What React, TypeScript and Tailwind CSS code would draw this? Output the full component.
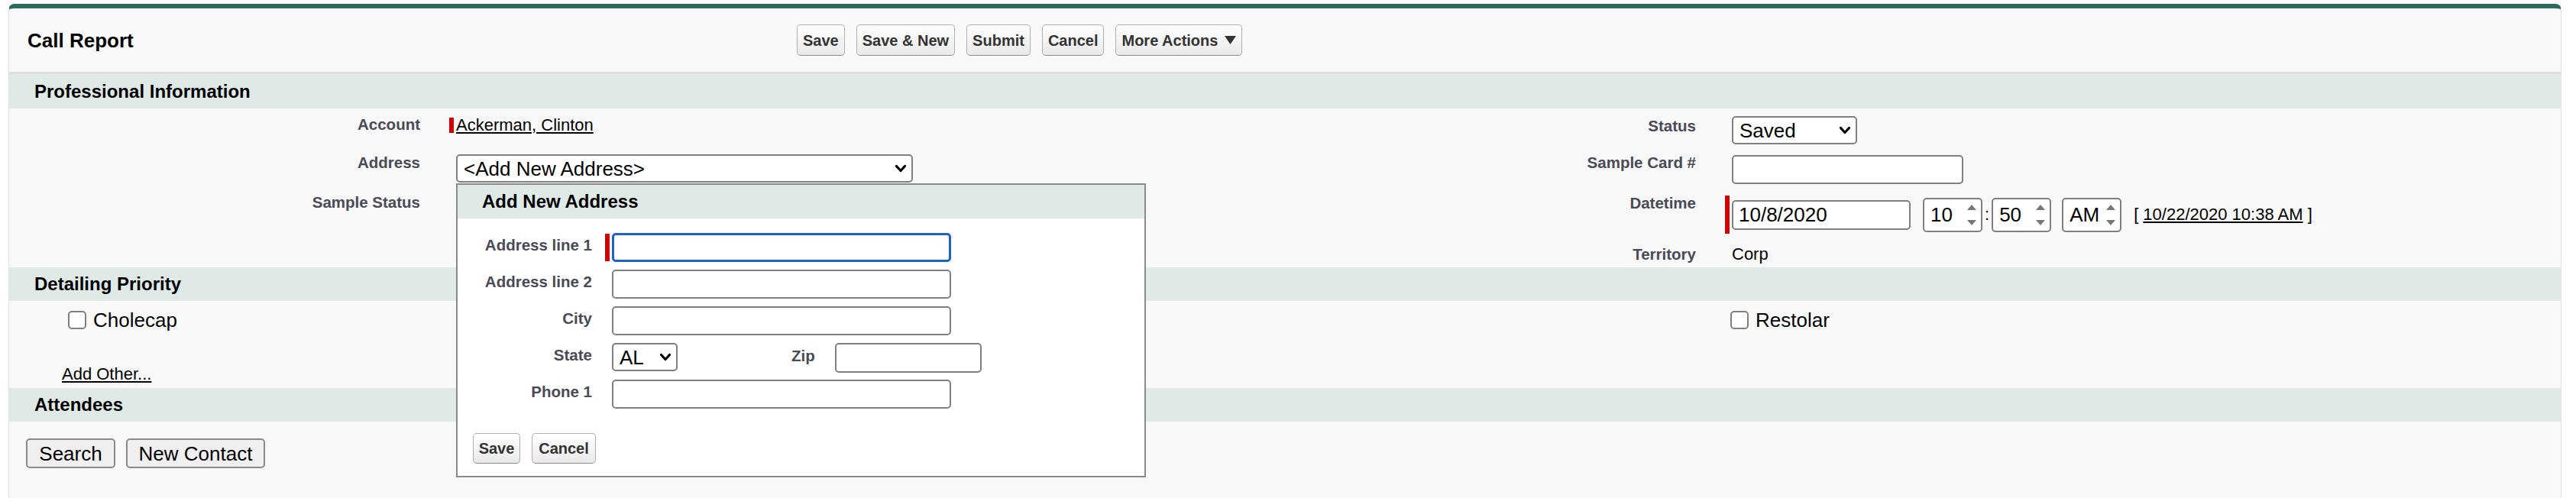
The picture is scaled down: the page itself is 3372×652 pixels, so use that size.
const label = "text-right text-[20.5px] leading-[24px] font-bold text-[#4a4a56]";
const field = "rounded-[5px] border-2 border-[#808080] bg-white";

function Chevron() {
  return (
    <svg width="16" height="11" viewBox="0 0 16 11">
      <path d="M2.5 2.5 L8 8.5 L13.5 2.5" fill="none" stroke="#000" strokeWidth="3.2" strokeLinecap="round" strokeLinejoin="round" />
    </svg>
  );
}

function Arrows() {
  return (
    <svg width="12" height="27" viewBox="0 0 12 27">
      <path d="M6 0 L12 7 L0 7 Z" fill="#777" />
      <path d="M0 20 L12 20 L6 27 Z" fill="#777" />
    </svg>
  );
}

function FakeSelect({ value, className = "" }: { value: string; className?: string }) {
  return (
    <div className={`flex items-center justify-between pl-[8px] pr-[6px] text-[26px] leading-[30px] text-black ${field} ${className}`}>
      <span>{value}</span>
      <Chevron />
    </div>
  );
}

function Spinner({ value }: { value: string }) {
  return (
    <div className={`flex h-[45px] w-[78px] items-center justify-between pl-[8px] pr-[6px] text-[26px] leading-[30px] ${field}`}>
      <span>{value}</span>
      <Arrows />
    </div>
  );
}

function Btn({ children, className = "" }: { children: React.ReactNode; className?: string }) {
  return (
    <button className={`flex items-center justify-center rounded-[5px] border border-[#b0b0b0] border-b-[#8c8c8c] bg-linear-to-b from-[#ffffff] to-[#e9e9e9] px-[7px] text-[20px] font-bold leading-[24px] text-[#333] ${className}`}>
      {children}
    </button>
  );
}

function PopupRow({ name, required, children }: { name: string; required?: boolean; children: React.ReactNode }) {
  return (
    <div className="flex h-[48px] items-start">
      <div className={`w-[176px] pt-[4px] ${label}`}>{name}</div>
      {required ? (
        <>
          <span className="ml-[17px] mt-[1px] h-[36px] w-[6px] bg-[#c00]" />
          <div className="ml-[3px]">{children}</div>
        </>
      ) : (
        <div className="ml-[26px]">{children}</div>
      )}
    </div>
  );
}

function SectionHead({ title }: { title: string }) {
  return (
    <div className="flex h-[44px] items-center bg-[#dfe9e6] pl-[33px] text-[24px] font-bold leading-[28px] text-black">
      {title}
    </div>
  );
}

export default function App() {
  return (
    <div className="min-h-[652px] bg-white pl-[11px] pt-[5px] font-['Liberation_Sans',Arial,sans-serif]">
      <div className="h-[647px] w-[3342px] rounded-t-[8px] border-x border-t-[6px] border-x-[#e2e2e2] border-t-[#2d6a5c] bg-[#f8f8f8]">
        {/* header */}
        <div className="flex h-[86px] items-center border-b-[3px] border-[#dddddd]">
          <h2 className="w-[1031px] pl-[24px] text-[26px] font-bold leading-[30px] text-black">Call Report</h2>
          <div className="flex gap-[15px]">
            <Btn className="h-[41px]">Save</Btn>
            <Btn className="h-[41px]">Save &amp; New</Btn>
            <Btn className="h-[41px]">Submit</Btn>
            <Btn className="h-[41px]">Cancel</Btn>
            <Btn className="h-[41px]">
              More Actions
              <svg className="ml-[9px]" width="15" height="11" viewBox="0 0 15 11">
                <path d="M0 0 L15 0 L7.5 11 Z" fill="#333" />
              </svg>
            </Btn>
          </div>
        </div>

        <div className="flex h-[45px] items-center bg-[#dfe9e6] pl-[33px] text-[24px] font-bold leading-[28px] text-black">
          Professional Information
        </div>

        {/* professional information */}
        <div className="grid h-[208px] grid-cols-[562px_1109px_561px_1108px] grid-rows-[54px_52px_64px_38px]">
          <div className={`pr-[24px] pt-[9px] ${label}`}>Account</div>
          <div className="pl-[23px] pt-[10px]">
            <div className="-ml-[9px] flex items-center">
              <span className="h-[20px] w-[6px] bg-[#c00]" />
              <a className="ml-[3px] text-[22px] leading-[24px] text-black underline">Ackerman, Clinton</a>
            </div>
          </div>
          <div className={`pr-[24px] pt-[11px] ${label}`}>Status</div>
          <div className="pl-[23px] pt-[10px]">
            <FakeSelect value="Saved" className="h-[37px] w-[164px]" />
          </div>

          <div className={`pr-[24px] pt-[5px] ${label}`}>Address</div>
          <div className="pl-[23px] pt-[6px]">
            <div className="relative w-[598px]">
              <FakeSelect value="<Add New Address>" className="h-[37px] w-[598px]" />
              <div className="absolute left-0 top-[38px] z-10 h-[385px] w-[903px] border-2 border-[#8a8a8a] bg-white">
                <div className="flex h-[44px] items-center bg-[#dfe9e6] pl-[32px] text-[24px] font-bold leading-[28px] text-black">
                  Add New Address
                </div>
                <div className="pt-[19px]">
                  <PopupRow name="Address line 1" required>
                    <div className="h-[38px] w-[444px] rounded-[5px] border-[3px] border-[#2060c9] bg-white" />
                  </PopupRow>
                  <PopupRow name="Address line 2">
                    <div className={`h-[38px] w-[444px] ${field}`} />
                  </PopupRow>
                  <PopupRow name="City">
                    <div className={`h-[38px] w-[444px] ${field}`} />
                  </PopupRow>
                  <div className="flex h-[48px] items-start">
                    <div className={`w-[176px] pt-[4px] ${label}`}>State</div>
                    <FakeSelect value="AL" className="ml-[26px] h-[37px] w-[86px] pr-[5px]" />
                    <div className={`ml-[149px] pt-[5px] ${label}`}>Zip</div>
                    <div className={`ml-[26px] h-[39px] w-[192px] ${field}`} />
                  </div>
                  <PopupRow name="Phone 1">
                    <div className={`h-[38px] w-[444px] ${field}`} />
                  </PopupRow>
                </div>
                <div className="mt-[22px] flex gap-[15px] pl-[20px]">
                  <Btn className="h-[40px] w-[62px]">Save</Btn>
                  <Btn className="h-[40px] w-[84px]">Cancel</Btn>
                </div>
              </div>
            </div>
          </div>
          <div className={`pr-[24px] pt-[5px] ${label}`}>Sample Card #</div>
          <div className="pl-[23px] pt-[7px]">
            <div className={`h-[38px] w-[303px] ${field}`} />
          </div>

          <div className={`pr-[24px] pt-[5px] ${label}`}>Sample Status</div>
          <div />
          <div className={`pr-[24px] pt-[6px] ${label}`}>Datetime</div>
          <div className="pl-[23px] pt-[8px]">
            <div className="-ml-[9px] flex h-[50px] items-center">
              <span className="h-[50px] w-[6px] bg-[#c00]" />
              <div className={`ml-[3px] flex h-[39px] w-[234px] items-center pl-[7px] text-[26px] leading-[30px] ${field}`}>10/8/2020</div>
              <div className="ml-[16px]">
                <Spinner value="10" />
              </div>
              <span className="mx-[3px] text-[22px] leading-[24px]">:</span>
              <Spinner value="50" />
              <div className="ml-[14px]">
                <Spinner value="AM" />
              </div>
              <span className="ml-[16px] text-[22px] leading-[24px] text-black">
                [ <a className="underline">10/22/2020 10:38 AM</a> ]
              </span>
            </div>
          </div>

          <div />
          <div />
          <div className={`pr-[24px] pt-[9px] ${label}`}>Territory</div>
          <div className="pl-[23px] pt-[9px] text-[22px] leading-[24px] text-black">Corp</div>
        </div>

        <SectionHead title="Detailing Priority" />
        <div className="h-[114px] pt-[10px]">
          <div className="flex h-[30px] items-center">
            <div className="flex w-[2253px] items-center pl-[77px]">
              <span className={`h-[24px] w-[24px] ${field}`} />
              <span className="ml-[9px] text-[26px] leading-[30px] text-black">Cholecap</span>
            </div>
            <span className={`h-[24px] w-[24px] ${field}`} />
            <span className="ml-[9px] text-[26px] leading-[30px] text-black">Restolar</span>
          </div>
          <a className="ml-[69px] mt-[44px] block w-fit text-[22px] leading-[24px] text-black underline">Add Other...</a>
        </div>

        <SectionHead title="Attendees" />
        <div className="flex gap-[14px] pl-[22px] pt-[22px]">
          <button className="h-[39px] w-[117px] rounded-[5px] border-2 border-[#8a8a8a] bg-[#efefef] text-[26px] leading-[30px] text-black">Search</button>
          <button className="h-[39px] w-[182px] rounded-[5px] border-2 border-[#8a8a8a] bg-[#efefef] text-[26px] leading-[30px] text-black">New Contact</button>
        </div>
      </div>
    </div>
  );
}
